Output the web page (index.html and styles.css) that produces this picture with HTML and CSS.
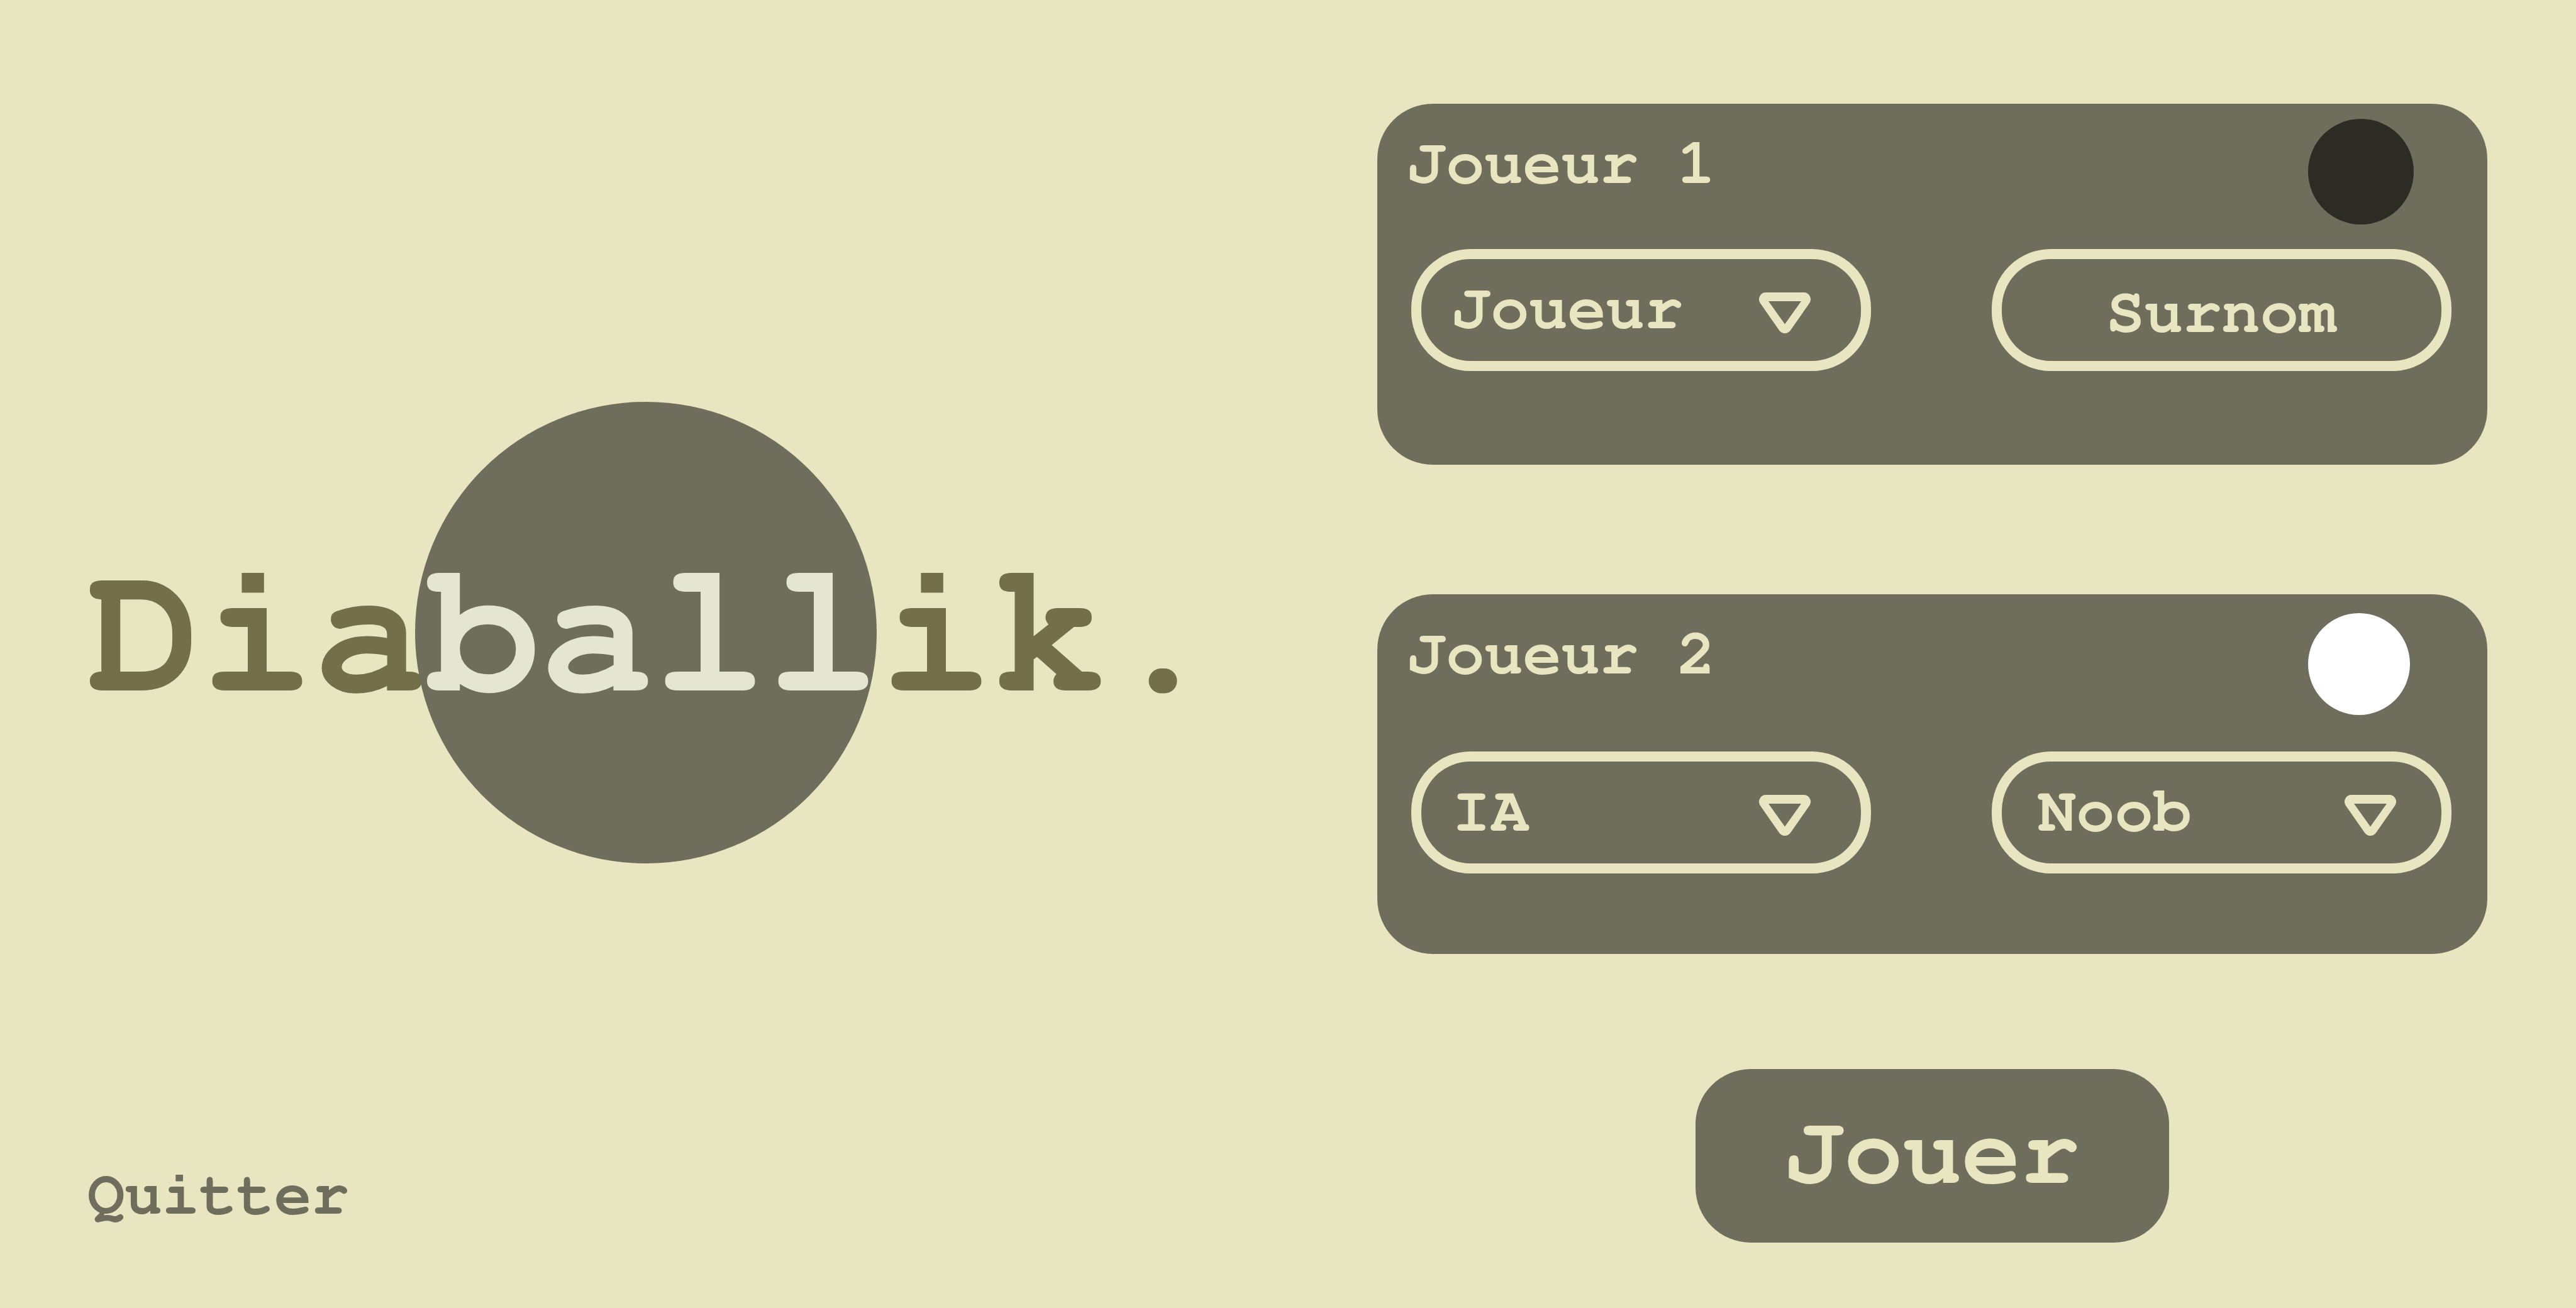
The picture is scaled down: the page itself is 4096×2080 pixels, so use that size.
FILE: index.html
```html
<!DOCTYPE html>
<html lang="fr">
<head>
  <meta charset="utf-8">
  <meta name="viewport" content="width=device-width, initial-scale=1">
  <title>Diaballik</title>
  <link rel="stylesheet" href="styles.css">
</head>
<body>
  <svg width="0" height="0" class="sprite" aria-hidden="true">
    <symbol id="arrow" viewBox="0 0 84 66">
      <path fill-rule="evenodd" d="M12 0H72A11 11 0 0 1 81 17.3L51 60.3A11 11 0 0 1 33 60.3L3 17.3A11 11 0 0 1 12 0ZM16 14L42 50.5L68 14Z"/>
    </symbol>
  </svg>

  <main class="menu">
    <section class="intro">
      <div class="hero">
        <div class="hero-ball"></div>
        <h1 class="hero-title">Dia<span class="hero-title-light">ball</span>ik.</h1>
      </div>
      <button class="quit" type="button">Quitter</button>
    </section>

    <form class="setup">
      <section class="card">
        <header class="card-head">
          <h2 class="card-title">Joueur 1</h2>
          <div class="disc-slot"><div class="disc disc-dark"></div></div>
        </header>
        <div class="fields">
          <div class="field">
            <select class="control" aria-label="Type du joueur 1">
              <option>Joueur</option>
              <option>IA</option>
            </select>
            <svg class="arrow" aria-hidden="true"><use href="#arrow"/></svg>
          </div>
          <div class="field">
            <input class="control control-name" type="text" placeholder="Surnom" aria-label="Surnom du joueur 1">
          </div>
        </div>
      </section>

      <section class="card card-second">
        <header class="card-head">
          <h2 class="card-title">Joueur 2</h2>
          <div class="disc-slot"><div class="disc disc-light"></div></div>
        </header>
        <div class="fields">
          <div class="field">
            <select class="control" aria-label="Type du joueur 2">
              <option>IA</option>
              <option>Joueur</option>
            </select>
            <svg class="arrow" aria-hidden="true"><use href="#arrow"/></svg>
          </div>
          <div class="field field-level">
            <select class="control" aria-label="Niveau de l'IA">
              <option>Noob</option>
            </select>
            <svg class="arrow" aria-hidden="true"><use href="#arrow"/></svg>
          </div>
        </div>
      </section>

      <button class="play" type="button">Jouer</button>
    </form>
  </main>
</body>
</html>
```
FILE: styles.css
```css
:root {
  --cream: #e8e6c1;
  --stone: #6f6e5c;
  --olive: #726f49;
  --mono: "FreeMono", "Courier New", "Liberation Mono", monospace;
}

* {
  box-sizing: border-box;
}

body {
  margin: 0;
  background: var(--cream);
  color: var(--cream);
  font-family: var(--mono);
  font-weight: 700;
}

h1,
h2 {
  margin: 0;
  font-weight: 700;
}

button,
select,
input {
  margin: 0;
  border: 0;
  font: inherit;
  color: inherit;
  background: none;
}

.sprite {
  display: none;
}

.menu {
  display: grid;
  grid-template-columns: 1fr 1fr;
  min-height: 100vh;
}

.intro {
  display: flex;
  flex-direction: column;
  justify-content: space-between;
  align-items: flex-start;
  padding: 639px 0 123px 139px;
}

/* The title is stacked over the ball in a single grid cell. */
.hero {
  display: grid;
  align-items: center;
}

.hero-ball,
.hero-title {
  grid-area: 1 / 1;
}

.hero-ball {
  width: 734px;
  height: 734px;
  margin-left: 521px;
  border-radius: 50%;
  background: var(--stone);
}

.hero-title {
  padding-top: 4px;
  font-size: 300px;
  line-height: 340px;
  color: var(--olive);
}

.hero-title-light {
  color: #e5e5d3;
}

.quit {
  padding: 0;
  font-size: 99px;
  line-height: 112px;
  color: var(--stone);
}

.setup {
  display: flex;
  flex-direction: column;
  padding: 165px 141px 104px 142px;
}

.card {
  padding-bottom: 149px;
  border-radius: 88px;
  background: var(--stone);
}

.card-second {
  margin-top: 206px;
  padding-bottom: 128px;
}

.card-head {
  display: flex;
  justify-content: space-between;
  height: 231px;
  padding: 24px 117px 0 48px;
}

.card-second .card-head {
  height: 250px;
}

.card-title {
  padding-top: 20px;
  font-size: 102px;
  line-height: 102px;
}

.disc-slot {
  width: 168px;
}

.disc {
  width: 168px;
  height: 168px;
  border-radius: 50%;
}

.disc-dark {
  background: #2c2b24;
}

.disc-light {
  width: 162px;
  height: 162px;
  margin-top: 6px;
  background: #fff;
}

.fields {
  display: grid;
  grid-template-columns: 1fr 1fr;
  gap: 192px;
  padding: 0 57px 0 54px;
}

/* The arrow shares the drop-down's grid cell. */
.field {
  display: grid;
  align-items: center;
}

.control,
.arrow {
  grid-area: 1 / 1;
}

.control {
  width: 100%;
  height: 194px;
  padding: 0 48px 4px 49px;
  border: 16px solid var(--cream);
  border-radius: 94px;
  font-size: 102px;
  line-height: 120px;
  appearance: none;
}

.field-level .control {
  padding-left: 57px;
}

.control-name {
  padding: 8px 48px 0;
  text-align: center;
}

.control-name::placeholder {
  color: inherit;
  opacity: 1;
}

.arrow {
  justify-self: end;
  width: 84px;
  height: 66px;
  margin: 9px 95px 0 0;
  fill: var(--cream);
  pointer-events: none;
}

.field-level .arrow {
  margin-right: 87px;
}

.play {
  align-self: center;
  width: 753px;
  height: 276px;
  margin-top: 183px;
  padding: 0 0 8px;
  border-radius: 88px;
  background: var(--stone);
  font-size: 156px;
  line-height: 180px;
}
```
